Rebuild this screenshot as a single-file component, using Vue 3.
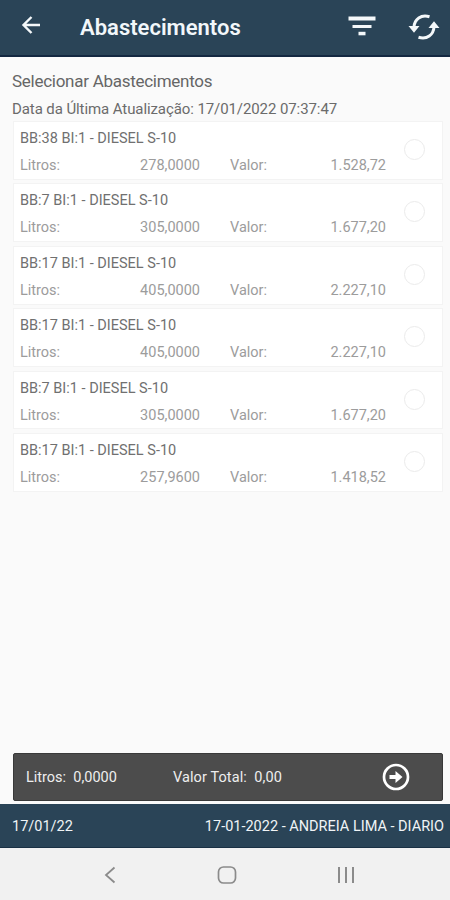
<script setup>
const items = [
  { title: 'BB:38 BI:1 - DIESEL S-10', litros: '278,0000', valor: '1.528,72' },
  { title: 'BB:7 BI:1 - DIESEL S-10', litros: '305,0000', valor: '1.677,20' },
  { title: 'BB:17 BI:1 - DIESEL S-10', litros: '405,0000', valor: '2.227,10' },
  { title: 'BB:17 BI:1 - DIESEL S-10', litros: '405,0000', valor: '2.227,10' },
  { title: 'BB:7 BI:1 - DIESEL S-10', litros: '305,0000', valor: '1.677,20' },
  { title: 'BB:17 BI:1 - DIESEL S-10', litros: '257,9600', valor: '1.418,52' },
]
</script>

<template>
  <div class="screen">
    <header class="topbar">
      <svg class="back" viewBox="0 0 20 20" width="20" height="20" fill="none" stroke="#f4f8fa" stroke-width="2.4">
        <path d="M19 10H3M10.500 2 2.500 10l8 8" />
      </svg>
      <h1 class="title">Abastecimentos</h1>
      <svg class="filter" viewBox="0 0 28 20" width="28" height="20" fill="#f4f8fa">
        <rect x="0.5" y="0.5" width="27" height="4" />
        <rect x="4.5" y="9" width="19" height="3" />
        <rect x="10.5" y="15.800" width="7" height="3.500" />
      </svg>
      <svg class="sync" viewBox="0 0 32 26" width="32" height="26" fill="none" stroke="#f4f8fa" stroke-width="3">
        <path d="M21.500 2.800C13 .2 6.500 5.200 6 13" />
        <path d="M10.500 23.200C19 25.800 25.500 20.800 26 13" />
        <path d="M.5 12h11L6 18.800zM20.500 14h11L26 7.200z" fill="#f4f8fa" stroke="none" />
      </svg>
    </header>

    <main class="content">
      <h2 class="heading">Selecionar Abastecimentos</h2>
      <p class="updated">Data da Última Atualização: 17/01/2022 07:37:47</p>
      <ul class="list">
        <li v-for="(item, i) in items" :key="i" class="card">
          <div class="info">
            <div class="name">{{ item.title }}</div>
            <div class="values">
              <span>Litros:</span>
              <span class="num">{{ item.litros }}</span>
              <span class="label">Valor:</span>
              <span class="num">{{ item.valor }}</span>
            </div>
          </div>
          <span class="radio"></span>
        </li>
      </ul>
    </main>

    <section class="totals">
      <span class="total-litros">Litros:&nbsp; 0,0000</span>
      <span class="total-valor">Valor Total:&nbsp; 0,00</span>
      <svg class="go" viewBox="0 0 28 28" width="28" height="28">
        <circle cx="14" cy="14" r="12" fill="none" stroke="#fff" stroke-width="2.700" />
        <path d="M7.500 12h6V8l7 6-7 6v-4h-6z" fill="#fff" />
      </svg>
    </section>

    <footer class="status">
      <span class="date">17/01/22</span>
      <span class="user">17-01-2022 - ANDREIA LIMA - DIARIO</span>
    </footer>

    <nav class="navbar">
      <svg viewBox="0 0 12 18" width="12" height="18" fill="none" stroke="#8b8b8b" stroke-width="1.800">
        <path d="M10.500 1.500 2 9l8.500 7.500" />
      </svg>
      <svg class="home" viewBox="0 0 20 18" width="20" height="18" fill="none" stroke="#8b8b8b" stroke-width="1.700">
        <rect x="1.500" y="1" width="17" height="16" rx="5" />
      </svg>
      <svg viewBox="0 0 18 18" width="18" height="18" fill="none" stroke="#8b8b8b" stroke-width="2">
        <path d="M2 1v16M9 1v16M16 1v16" />
      </svg>
    </nav>
  </div>
</template>

<style>
body {
  margin: 0;
}
</style>

<style scoped>
.screen {
  box-sizing: border-box;
  display: flex;
  flex-direction: column;
  width: 450px;
  height: 900px;
  overflow: hidden;
  background: #fafafa;
  font-family: Roboto, "Liberation Sans", sans-serif;
  white-space: nowrap;
}
.topbar {
  box-sizing: border-box;
  display: flex;
  align-items: center;
  height: 57px;
  padding: 0 10.5px 3px 21px;
  background: #2a4457;
  border-bottom: 2px solid #142841;
}
.back {
  margin-top: -2px;
}
.title {
  flex: 1;
  margin: 3px 0 0 39px;
  color: #f2f7fa;
  font-size: 22px;
  font-weight: 600;
  line-height: 30px;
}
.filter {
  margin-right: 32px;
}
.sync {
  margin-top: 1px;
}
.content {
  flex: 1;
  padding: 13px 7px 0 12px;
}
.heading {
  margin: 0;
  color: #666;
  font-size: 17px;
  font-weight: 400;
  line-height: 22px;
  letter-spacing: -0.27px;
}
.updated {
  margin: 8px 0 0;
  color: #6b6b6b;
  font-size: 15px;
  line-height: 18px;
  letter-spacing: -0.09px;
}
.list {
  display: flex;
  flex-direction: column;
  gap: 3.5px;
  margin: 3px 0 0 1px;
  padding: 0;
  list-style: none;
}
.card {
  box-sizing: border-box;
  display: flex;
  align-items: flex-start;
  height: 58.9px;
  padding: 8px 17px 0 6px;
  border: 1px solid #f3f3f3;
  background: #fff;
}
.info {
  width: 366px;
}
.name {
  color: #707070;
  font-size: 14.5px;
  line-height: 18px;
}
.values {
  display: grid;
  grid-template-columns: 80px 100px 86px 100px;
  margin-top: 9px;
  color: #9c9c9c;
  font-size: 14.5px;
  line-height: 18px;
}
.num {
  text-align: right;
}
.label {
  padding-left: 30px;
}
.radio {
  box-sizing: border-box;
  width: 21px;
  height: 21px;
  margin: 9px 0 0 auto;
  border: 1.5px solid #ebebeb;
  border-radius: 50%;
}
.totals {
  box-sizing: border-box;
  display: flex;
  align-items: center;
  height: 48px;
  margin: 0 7px 0 13px;
  padding: 0 32px 0 12px;
  background: #4c4c4c;
  border: 1px solid #393939;
  border-radius: 2px;
  color: #eee;
  font-size: 14.5px;
}
.total-litros {
  width: 147px;
}
.total-valor {
  flex: 1;
  letter-spacing: 0.1px;
}
.status {
  box-sizing: border-box;
  display: flex;
  align-items: center;
  justify-content: space-between;
  height: 44px;
  margin-top: 3px;
  padding: 1px 6px 0 12px;
  background: #2a4457;
  border-bottom: 1px solid #193044;
  color: #f0f4f6;
  font-size: 14.5px;
}
.navbar {
  box-sizing: border-box;
  display: flex;
  align-items: center;
  justify-content: space-between;
  height: 52px;
  padding: 2px 95px 0 104px;
  background: #f1f1f1;
}
.home {
  margin-left: 1px;
}
</style>
